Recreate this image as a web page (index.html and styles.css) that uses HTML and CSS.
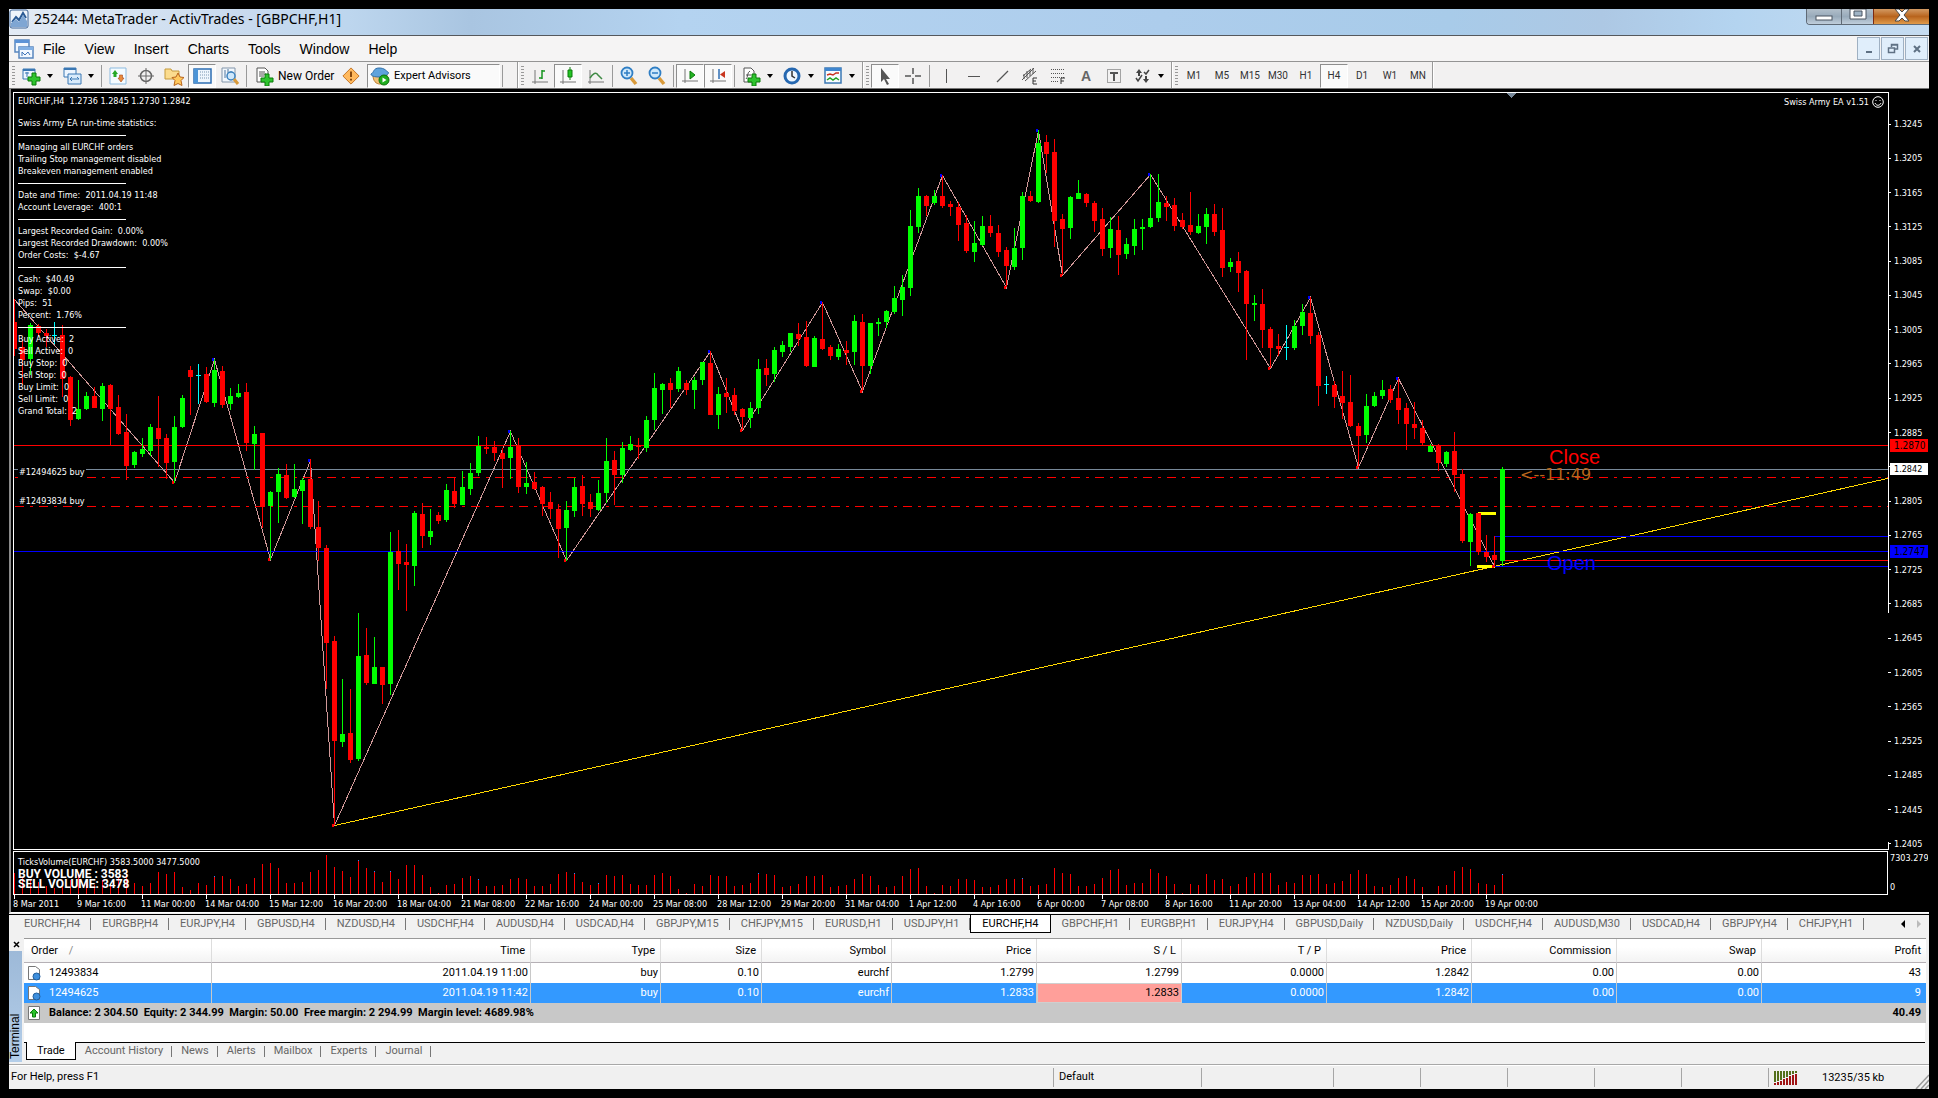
FILE: index.html
```html
<!DOCTYPE html>
<html lang="en">
<head>
<meta charset="utf-8">
<title>25244: MetaTrader - ActivTrades - [GBPCHF,H1]</title>
<link rel="stylesheet" href="styles.css">
</head>
<body>
<div class="window">
  <header class="titlebar">
    <svg class="app-icon" width="20" height="20" viewBox="0 0 20 20"><rect x="1" y="1" width="18" height="18" rx="2" fill="#eef4fb" stroke="#3e6496"/><path d="M3 13 7 8l3 3 4-7 3 5" fill="none" stroke="#2b5a94" stroke-width="2"/><path d="M2 18v-4l5-4 3 3 4-7 4 6v6z" fill="#7fa6d3"/></svg>
    <h1 class="title">25244: MetaTrader - ActivTrades - [GBPCHF,H1]</h1>
    <div class="caption-buttons">
      <button class="cap cap-min" aria-label="Minimize"><svg width="18" height="6"><rect x="1" y="1" width="16" height="4" fill="#fff" stroke="#4a5560"/></svg></button>
      <button class="cap cap-max" aria-label="Maximize"><svg width="18" height="12"><path d="M1 0h16v10H1z" fill="#fff" stroke="#4a5560"/><path d="M5 2h8v5H5z" fill="#9fb4c6" stroke="#4a5560"/></svg></button>
      <button class="cap cap-close" aria-label="Close"><svg width="16" height="13" viewBox="0 0 16 13"><path d="M1 0h4l3 3 3-3h4l-5 6 5 6h-4l-3-3-3 3H1l5-6z" fill="#fff" stroke="#4a4a4a"/></svg></button>
    </div>
  </header>

  <nav class="menubar">
    <svg class="menu-icon" width="20" height="20" viewBox="0 0 20 20"><path d="M1 1h14v12H1z" fill="#f2f8ff" stroke="#5a86be" stroke-width="1.5"/><path d="M1 1h14v3H1z" fill="#5d93d6"/><path d="M5 8h14v11H5z" fill="#f2f8ff" stroke="#5a86be" stroke-width="1.5"/><path d="M5 8h14v3H5z" fill="#82b0e4"/><path d="M8 17v-4l3 3 3-3 2 3" fill="none" stroke="#3f74b8"/></svg>
    <button>File</button><button>View</button><button>Insert</button><button>Charts</button><button>Tools</button><button>Window</button><button>Help</button>
    <div class="mdi-buttons">
      <button aria-label="Minimize chart"><svg width="12" height="12"><path d="M3 9h6" stroke="#5f7184" stroke-width="2"/></svg></button>
      <button aria-label="Restore chart"><svg width="12" height="12"><path d="M4.500 4V1.500h6V6H8M1.500 5h6v4.500h-6zM1 5h7M4 2h7" fill="none" stroke="#5f7184" stroke-width="1.500"/></svg></button>
      <button aria-label="Close chart"><svg width="12" height="12"><path d="m3 3 6 6M9 3l-6 6" stroke="#5f7184" stroke-width="2"/></svg></button>
    </div>
  </nav>

  <div class="toolbar">
    <div class="group group-main">
      <span class="grip"></span>
      <button class="tool drop" aria-label="New chart"><svg width="20" height="20"><path d="M2 3h12v10H2z" fill="#eef6ff" stroke="#3b78b4"/><path d="M2 3h12v2H2z" fill="#3b78b4"/><path d="M4 7h4M6 6v5" stroke="#3b78b4"/><path d="M11 7h4v4h4v4h-4v4h-4v-4H7v-4h4z" fill="#2fc42f" stroke="#0a7a0a"/></svg></button>
      <button class="tool drop" aria-label="Profiles"><svg width="20" height="20"><path d="M2 2h12v9H2z" fill="#eef6ff" stroke="#3b78b4"/><path d="M2 2h12v2H2z" fill="#3b78b4"/><path d="M6 8h13v10H6z" fill="#d9ebfb" stroke="#3b78b4"/><path d="M8 13h9M8 13l2-2M8 13l2 2M17 13l-2-2" fill="none" stroke="#3b78b4"/></svg></button>
      <span class="sep"></span>
      <button class="tool" aria-label="Market watch"><svg width="20" height="20"><path d="M2 2h16v16H2z" fill="#f4fbff" stroke="#8dbbe0"/><path d="m7 4 3 4H8.500v3h-3V8H4z" fill="#25a825"/><path d="m13 16 3-4h-1.500V9h-3v3H10z" fill="#e88b3c" stroke="#a7481c" stroke-width=".6"/></svg></button>
      <button class="tool" aria-label="Data window"><svg width="20" height="20"><circle cx="10" cy="10" r="5.500" fill="none" stroke="#666" stroke-width="1.500"/><path d="M10 2v16M2 10h16" stroke="#666"/></svg></button>
      <button class="tool" aria-label="Navigator"><svg width="20" height="20"><path d="M1 3h6l1 2h7v8H1z" fill="#fbdc8e" stroke="#c59a3d"/><path d="m14 7 2 4 4 .5-3 3 1 5-4-2-4 2 1-5-3-3 4-.5z" fill="#ffc95e" stroke="#b9651b"/></svg></button>
      <button class="tool pressed" aria-label="Terminal"><svg width="20" height="20"><path d="M2 3h17v14H2z" fill="#eef6fd" stroke="#2d6db3" stroke-width="1.500"/><path d="M2 3h4v14H2z" fill="#4c94d6"/><path d="M8 6h9M8 9h9M8 12h9" stroke="#7895b0" stroke-dasharray="1 1"/></svg></button>
      <button class="tool" aria-label="Strategy tester"><svg width="20" height="20"><path d="M2 2h13v14H2z" fill="#f2f7fc" stroke="#8295aa"/><path d="M5 4v8M8 3v6M11 5v6" stroke="#51779f"/><circle cx="11" cy="10" r="4" fill="#cfe8fb" stroke="#3c82be" stroke-width="1.500"/><path d="m14 13 4 5" stroke="#d99a3a" stroke-width="3"/></svg></button>
      <span class="sep"></span>
      <button class="tool labelled"><svg width="20" height="20"><path d="M3 2h8l3 3v11H3z" fill="#fff" stroke="#555"/><path d="M5 6h6M5 8h7M5 10h5" stroke="#555"/><path d="M11 8h4v4h4v4h-4v4h-4v-4H7v-4h4z" fill="#2fc42f" stroke="#0a7a0a"/></svg>New Order</button>
      <button class="tool" aria-label="Alert"><svg width="18" height="18" viewBox="0 0 20 20"><path d="m10 1 9 9-9 9-9-9z" fill="#ffb95e" stroke="#c06c1a"/><path d="M10 5v6M10 13v2" stroke="#7a3c06" stroke-width="2"/></svg></button>
      <button class="tool expert pressed"><svg width="20" height="20"><path d="M3 9c0 6 3 9 7 9s7-3 7-9z" fill="#f2c078" stroke="#b97c2d"/><path d="M1 8c3-1 2-6 8-6s7 3 9 4-2 5-8 5-9-1-9-3z" fill="#5fa3dc" stroke="#2e6ea8"/><circle cx="14" cy="14" r="5" fill="#20ae20" stroke="#0b700b"/><path d="m12.500 11.500 4 2.500-4 2.500z" fill="#fff"/></svg>Expert Advisors</button>
      <span class="sep"></span>
    </div>
    <div class="group">
      <span class="grip"></span>
      <button class="tool" aria-label="Bar chart"><svg width="20" height="20"><path d="M5 4v14M2 16h16" fill="none" stroke="#777"/><path d="M12 4v9M12 5h3M9 12h3" stroke="#17941f" stroke-width="1.500"/></svg></button>
      <button class="tool pressed" aria-label="Candlesticks"><svg width="20" height="20"><path d="M5 4v14M2 16h16" stroke="#777"/><path d="M12 1v13" stroke="#0a7a0a"/><path d="M10 4h4v7h-4z" fill="#23c423" stroke="#0a7a0a"/></svg></button>
      <button class="tool" aria-label="Line chart"><svg width="20" height="20"><path d="M4 4v14M2 16h16" stroke="#777"/><path d="M4 12c3-5 6-6 8-3l4 4" fill="none" stroke="#3f8a45" stroke-width="1.500"/></svg></button>
      <span class="sep"></span>
      <button class="tool" aria-label="Zoom in"><svg width="20" height="20"><path d="m12 12 5 6" stroke="#d99a3a" stroke-width="3.500"/><circle cx="8" cy="7" r="5.500" fill="#cfe8fb" stroke="#2f7ec4" stroke-width="1.800"/><path d="M8 4v6M5 7h6" stroke="#2f7ec4" stroke-width="1.500"/></svg></button>
      <button class="tool" aria-label="Zoom out"><svg width="20" height="20"><path d="m12 12 5 6" stroke="#d99a3a" stroke-width="3.500"/><circle cx="8" cy="7" r="5.500" fill="#cfe8fb" stroke="#2f7ec4" stroke-width="1.800"/><path d="M5 7h6" stroke="#2f7ec4" stroke-width="1.500"/></svg></button>
      <span class="sep"></span>
      <button class="tool pressed" aria-label="Auto scroll"><svg width="20" height="20"><path d="M5 3v14M2 15h16" stroke="#777"/><path d="m10 5 5 4-5 4z" fill="#23b423" stroke="#0a7a0a"/></svg></button>
      <button class="tool pressed" aria-label="Chart shift"><svg width="20" height="20"><path d="M5 3v14M2 15h16" stroke="#777"/><path d="M11 3v10" stroke="#2d6db3" stroke-width="1.500"/><path d="m17 5-5 3.500 5 3.500z" fill="#c8361f"/></svg></button>
      <span class="sep"></span>
      <button class="tool drop" aria-label="Indicators"><svg width="20" height="20"><path d="M3 2h7l3 3v11H3z" fill="#fff" stroke="#555"/><path d="M5 13c2-1 1-7 4-8M5 9h5" fill="none" stroke="#555"/><path d="M11 8h4v4h4v4h-4v4h-4v-4H7v-4h4z" fill="#2fc42f" stroke="#0a7a0a"/></svg></button>
      <button class="tool drop" aria-label="Periods"><svg width="20" height="20"><circle cx="10" cy="10" r="7" fill="#eef7ff" stroke="#2567b0" stroke-width="3"/><path d="M10 5v5l3 2" fill="none" stroke="#333" stroke-width="1.500"/></svg></button>
      <button class="tool drop" aria-label="Templates"><svg width="20" height="20"><path d="M2 2h16v15H2z" fill="#f7fbff" stroke="#3b78b4" stroke-width="1.500"/><path d="M2 2h16v3H2z" fill="#3f86cf"/><path d="m4 9 3-1 3 1 3-2 3 0" fill="none" stroke="#c8321f" stroke-width="1.500"/><path d="m4 14 3-2 3 2 3-2 3 2" fill="none" stroke="#23a323" stroke-width="1.500"/></svg></button>
    </div>
    <div class="group">
      <span class="grip"></span>
      <button class="tool pressed" aria-label="Cursor"><svg width="20" height="20"><path d="M6 2v14l3-3 3 6 2-1-3-5h4z" fill="#555"/></svg></button>
      <button class="tool" aria-label="Crosshair"><svg width="20" height="20"><path d="M10 2v6M10 12v6M2 10h6M12 10h6" stroke="#555" stroke-width="1.500"/></svg></button>
      <span class="sep"></span>
      <button class="tool" aria-label="Vertical line"><svg width="20" height="20"><path d="M10.500 3v14" stroke="#555"/></svg></button>
      <button class="tool" aria-label="Horizontal line"><svg width="20" height="20"><path d="M4 10.500h12" stroke="#555"/></svg></button>
      <button class="tool" aria-label="Trendline"><svg width="20" height="20"><path d="M5 16 16 5" stroke="#555" stroke-width="1.300"/></svg></button>
      <button class="tool" aria-label="Equidistant channel"><svg width="20" height="20"><path d="M2 14 14 2M3 10l8-7M5 15 16 5M4 13V8M7 12V5M10 10V4M13 8V2" stroke="#555"/><path d="M17 12h-4v6h4M13 15h3" fill="none" stroke="#333"/></svg></button>
      <button class="tool" aria-label="Fibonacci retracement"><svg width="20" height="20"><path d="M3 3.500h14M3 7.500h14M3 11.500h14M3 15.500h8" stroke="#555" stroke-dasharray="1 1"/><path d="M17 12h-4v6M13 15h3" fill="none" stroke="#333"/></svg></button>
      <button class="tool letter">A</button>
      <button class="tool" aria-label="Text label"><svg width="20" height="20"><path d="M3.500 3.500h13v13h-13z" fill="none" stroke="#555" stroke-dasharray="1 1"/><path d="M6 7h8M10 7v8" stroke="#555" stroke-width="2"/></svg></button>
      <button class="tool drop" aria-label="Arrows"><svg width="20" height="20"><path d="m7 3 3 4H8v3H6V7H4zM14 17l-3-4h2v-3h2v3h2z" fill="#444"/><path d="m4 12 2 3 4-6M12 6l2 2 3-4" fill="none" stroke="#444" stroke-width="1.500"/></svg></button>
    </div>
    <div class="group">
      <span class="grip"></span>
      <button class="tool period">M1</button><button class="tool period">M5</button><button class="tool period">M15</button><button class="tool period">M30</button><button class="tool period">H1</button><button class="tool period pressed">H4</button><button class="tool period">D1</button><button class="tool period">W1</button><button class="tool period">MN</button>
    </div>
  </div>

  <main class="chart">
    <section class="plot" aria-label="EURCHF H4 price chart">
      <svg class="canvas"><g id="price" transform="translate(-14 -93)"></g></svg>
      <div class="comment">
        <p class="ohlc">EURCHF,H4&nbsp; 1.2736 1.2845 1.2730 1.2842</p>
        <p>Swiss Army EA run-time statistics:</p>
        <hr>
        <p>Managing all EURCHF orders</p>
        <p>Trailing Stop management disabled</p>
        <p>Breakeven management enabled</p>
        <hr>
        <p>Date and Time:&nbsp; 2011.04.19 11:48</p>
        <p>Account Leverage:&nbsp; 400:1</p>
        <hr>
        <p>Largest Recorded Gain:&nbsp; 0.00%</p>
        <p>Largest Recorded Drawdown:&nbsp; 0.00%</p>
        <p>Order Costs:&nbsp; $-4.67</p>
        <hr>
        <p>Cash:&nbsp; $40.49</p>
        <p>Swap:&nbsp; $0.00</p>
        <p>Pips:&nbsp; 51</p>
        <p>Percent:&nbsp; 1.76%</p>
        <hr>
        <p>Buy Active:&nbsp; 2</p>
        <p>Sell Active:&nbsp; 0</p>
        <p>Buy Stop:&nbsp; 0</p>
        <p>Sell Stop:&nbsp; 0</p>
        <p>Buy Limit:&nbsp; 0</p>
        <p>Sell Limit:&nbsp; 0</p>
        <p>Grand Total:&nbsp; 2</p>
      </div>
      <span class="order order-a">#12494625 buy</span>
      <span class="order order-b">#12493834 buy</span>
      <span class="advisor">Swiss Army EA v1.51 <svg width="12" height="12"><circle cx="6" cy="6" r="5.300" fill="none" stroke="#fff"/><path d="M4 4v1M8 4v1M3 7c1 3 5 3 6 0" fill="none" stroke="#fff"/></svg></span>
      <span class="mark close-mark">Close</span>
      <span class="mark timer-mark">&lt;--11:49</span>
      <span class="mark open-mark">Open</span>
    </section>
    <aside class="axis">
      <ol class="prices">
        <li>1.3245</li><li>1.3205</li><li>1.3165</li><li>1.3125</li><li>1.3085</li><li>1.3045</li><li>1.3005</li><li>1.2965</li><li>1.2925</li><li>1.2885</li><li>1.2845</li><li>1.2805</li><li>1.2765</li><li>1.2725</li><li>1.2685</li><li>1.2645</li><li>1.2605</li><li>1.2565</li><li>1.2525</li><li>1.2485</li><li>1.2445</li><li>1.2405</li>
      </ol>
      <span class="tag tag-red">1.2870</span>
      <span class="tag tag-white">1.2842</span>
      <span class="tag tag-blue">1.2747</span>
    </aside>
    <section class="volume" aria-label="Ticks volume">
      <svg class="canvas"><g id="ticks"></g></svg>
      <div class="volume-text">
        <p>TicksVolume(EURCHF) 3583.5000 3477.5000</p>
        <p class="strong">BUY VOLUME : 3583</p>
        <p class="strong">SELL VOLUME: 3478</p>
      </div>
    </section>
    <aside class="volume-axis"><span>7303.279</span><span>0</span></aside>
    <ol class="times">
      <li>8 Mar 2011</li><li>9 Mar 16:00</li><li>11 Mar 00:00</li><li>14 Mar 04:00</li><li>15 Mar 12:00</li><li>16 Mar 20:00</li><li>18 Mar 04:00</li><li>21 Mar 08:00</li><li>22 Mar 16:00</li><li>24 Mar 00:00</li><li>25 Mar 08:00</li><li>28 Mar 12:00</li><li>29 Mar 20:00</li><li>31 Mar 04:00</li><li>1 Apr 12:00</li><li>4 Apr 16:00</li><li>6 Apr 00:00</li><li>7 Apr 08:00</li><li>8 Apr 16:00</li><li>11 Apr 20:00</li><li>13 Apr 04:00</li><li>14 Apr 12:00</li><li>15 Apr 20:00</li><li>19 Apr 00:00</li>
    </ol>
  </main>

  <nav class="chart-tabs">
    <button>EURCHF,H4</button><button>EURGBP,H4</button><button>EURJPY,H4</button><button>GBPUSD,H4</button><button>NZDUSD,H4</button><button>USDCHF,H4</button><button>AUDUSD,H4</button><button>USDCAD,H4</button><button>GBPJPY,M15</button><button>CHFJPY,M15</button><button>EURUSD,H1</button><button>USDJPY,H1</button><button class="active">EURCHF,H4</button><button>GBPCHF,H1</button><button>EURGBP,H1</button><button>EURJPY,H4</button><button>GBPUSD,Daily</button><button>NZDUSD,Daily</button><button>USDCHF,H4</button><button>AUDUSD,M30</button><button>USDCAD,H4</button><button>GBPJPY,H4</button><button>CHFJPY,H1</button>
    <span class="scrollers">
      <button class="scroll-left" aria-label="Scroll left"></button>
      <button class="scroll-right" aria-label="Scroll right"></button>
    </span>
  </nav>

  <section class="terminal">
    <div class="rail">
      <button class="rail-close" aria-label="Close terminal"><svg width="7" height="7"><path d="m1 1 5 5M6 1 1 6" stroke="#000" stroke-width="1.500"/></svg></button>
      <h2 class="rail-title">Terminal</h2>
    </div>
    <div class="terminal-body">
      <table class="orders">
        <colgroup><col class="w-order"><col class="w-time"><col class="w-mid"><col class="w-size"><col class="w-mid"><col class="w-num"><col class="w-num"><col class="w-num"><col class="w-num"><col class="w-num"><col class="w-num"><col class="w-profit"></colgroup>
        <thead>
          <tr><th>Order <span class="sort">/</span></th><th>Time</th><th>Type</th><th>Size</th><th>Symbol</th><th>Price</th><th>S / L</th><th>T / P</th><th>Price</th><th>Commission</th><th>Swap</th><th>Profit</th></tr>
        </thead>
        <tbody>
          <tr><td><span class="cell"><svg width="14" height="16"><path d="M1.500 1.500h7l4 3v10h-11z" fill="#fff" stroke="#777"/><circle cx="9.500" cy="11.500" r="3.500" fill="#3f8fdc" stroke="#1f5e9e"/></svg>12493834</span></td><td>2011.04.19 11:00</td><td>buy</td><td>0.10</td><td>eurchf</td><td>1.2799</td><td>1.2799</td><td>0.0000</td><td>1.2842</td><td>0.00</td><td>0.00</td><td>43</td></tr>
          <tr class="selected"><td><span class="cell"><svg width="14" height="16"><path d="M1.500 1.500h7l4 3v10h-11z" fill="#fff" stroke="#777"/><circle cx="9.500" cy="11.500" r="3.500" fill="#3f8fdc" stroke="#1f5e9e"/></svg>12494625</span></td><td>2011.04.19 11:42</td><td>buy</td><td>0.10</td><td>eurchf</td><td>1.2833</td><td class="stop-hit">1.2833</td><td>0.0000</td><td>1.2842</td><td>0.00</td><td>0.00</td><td>9</td></tr>
          <tr class="balance"><td colspan="11"><span class="cell"><svg width="14" height="16"><path d="M1.500 1.500h11v13h-11z" fill="#fff" stroke="#777"/><path d="m7 4 4 4H8.500v4h-3V8H3z" fill="#2cc42c" stroke="#0b7a0b"/></svg>Balance: 2 304.50&nbsp; Equity: 2 344.99&nbsp; Margin: 50.00&nbsp; Free margin: 2 294.99&nbsp; Margin level: 4689.98%</span></td><td>40.49</td></tr>
        </tbody>
      </table>
      <nav class="terminal-tabs">
        <button class="active">Trade</button><button>Account History</button><button>News</button><button>Alerts</button><button>Mailbox</button><button>Experts</button><button>Journal</button>
      </nav>
    </div>
  </section>

  <footer class="status">
    <span class="s-help">For Help, press F1</span>
    <span class="s-profile">Default</span>
    <span class="s-wide"></span><span class="s-cell"></span><span class="s-cell"></span><span class="s-cell"></span><span class="s-cell"></span><span class="s-cell"></span>
    <span class="s-traffic">
      <svg width="24" height="14"><path d="M1 0v11M4 0v10M7 0v9M10 0v7M13 0v6M16 0v4M19 0v3M22 0v2" stroke="#54701c" stroke-width="2"/><path d="M1 12v2M4 11v3M7 10v4M10 8v6M13 7v7M16 5v9M19 4v10M22 3v11" stroke="#a01414" stroke-width="2"/></svg>
      13235/35 kb
    </span>
    <svg class="resize" width="14" height="16"><path d="M14 2 1 16M14 7 6 16M14 12l-4 4" stroke="#999" stroke-width="1.500"/></svg>
  </footer>
</div>
<script src="chart.js"></script>
</body>
</html>
```
FILE: styles.css
```css
* { box-sizing: border-box; }
html { background: #000; }
body { margin: 0; padding: 9px; font: 11px/14px Roboto, "Liberation Sans", sans-serif; color: #000; }
button { margin: 0; padding: 0; border: 0; background: none; font: inherit; color: inherit; white-space: nowrap; }
h1, h2, p, ol { margin: 0; padding: 0; font-weight: normal; list-style: none; }
svg { flex: none; }
.window { display: flex; flex-direction: column; background: #f1f1f1; overflow: hidden; }

/* title bar */
.titlebar { display: flex; align-items: flex-start; height: 27px; border-bottom: 1px solid #55585c; background: linear-gradient(90deg, #e3ebf5 0, #c8daee 240px, #bdd6ee 340px, #a9c5e1 24%, #b4d3f0 35%, #adcdec 60%, #a8cbe9 75%, #adc8e4 83%, #b4d4f0 90%, #c6dcf1 100%); }
.title { flex: 1; margin-left: 5px; font: 14px/20px "Noto Sans", "Liberation Sans", sans-serif; }
.caption-buttons { display: flex; align-self: flex-start; height: 16px; border: 1px solid #5f6a76; border-top: 0; border-right: 0; border-radius: 0 0 0 4px; overflow: hidden; }
.cap { display: flex; justify-content: center; align-items: flex-start; width: 34px; background: linear-gradient(#b2bfca, #98aaba 50%, #c0cedb); }
.cap-min { padding-top: 6px; }
.cap-max { width: 32px; border-left: 1px solid #5f6a76; }
.cap-close { width: 56px; border-left: 1px solid #7c2a12; background: linear-gradient(#d39a63, #b8641d 50%, #e19a4a); }

/* menu */
.menubar { display: flex; align-items: center; height: 26px; padding-left: 5px; border-bottom: 1px solid #949494; background: #f5f4f4; font: 14px/18px "Liberation Sans", sans-serif; }
.menubar > button { padding: 0 10px 0 9px; }
.mdi-buttons { display: flex; gap: 1px; margin-left: auto; padding-right: 1px; }
.mdi-buttons button { display: flex; align-items: center; justify-content: center; width: 23px; height: 23px; border: 1px solid #9fb0c2; background: #e0eefb; }

/* toolbar */
.toolbar { display: flex; height: 27px; border-bottom: 1px solid #777; background: #f2f1f1; font-size: 12px; }
.group { display: flex; align-items: center; height: 26px; padding: 1px 2px 0 3px; border-right: 1px solid #999; box-shadow: 1px 0 #fff; }
.group-main { width: 509px; }
.group:last-child { padding-right: 0; }
.grip { width: 3px; height: 19px; margin-right: 2px; background: repeating-linear-gradient(#999 0 1px, transparent 1px 3px); }
.sep { width: 1px; height: 22px; margin: 0 2px; background: #999; }
.tool { display: flex; align-items: center; justify-content: center; width: 28px; height: 24px; flex: none; }
.pressed { border: 1px solid; border-color: #8e8e8e #fff #fff #8e8e8e; background: #fafafa; }
.drop { width: 41px; gap: 6px; padding: 0 3px 0 4px; justify-content: flex-start; }
.drop::after { content: ""; border: 3px solid transparent; border-top: 4px solid #000; border-bottom: 0; }
.labelled { width: 88px; gap: 4px; justify-content: flex-start; padding-left: 5px; }
.expert { width: 133px; gap: 4px; justify-content: flex-start; margin-left: 2px; padding-left: 2px; font-size: 11px; }
.letter { font: bold 14px/16px "Liberation Sans", sans-serif; color: #666; }
.period { font-size: 10px; color: #333; }

/* chart */
.chart { display: grid; grid-template: 758px 44px 16px / minmax(0, 1fr) 40px; row-gap: 1px; padding: 3px 1px 0 2px; border-left: 2px solid #8a8a8a; border-bottom: 1px solid #fff; background: #000; color: #fff; font: 9px/12px "DejaVu Sans Condensed", "Noto Sans", sans-serif; }
.canvas { display: block; width: 100%; height: 100%; overflow: hidden; shape-rendering: crispEdges; }
.plot, .volume { position: relative; border: 1px solid #fff; }
.plot { border-right: 0; }
.comment { position: absolute; left: 4px; top: 2px; white-space: nowrap; }
.comment .ohlc { margin-bottom: 10px; }
.comment hr { width: 108px; height: 1px; margin: 6px 0 5px; border: 0; background: #fff; }
.order { position: absolute; left: 4px; padding: 0 1px; background: #000; }
.order-a { top: 373px; }
.order-b { top: 402px; background: none; }
.advisor { position: absolute; right: 4px; top: 3px; display: flex; gap: 3px; }
.mark { position: absolute; font: 20px/24px "Liberation Sans", sans-serif; }
.close-mark { left: 1535px; top: 352px; color: #f00; }
.timer-mark { left: 1506px; top: 370px; font: 16px/24px "DejaVu Sans", sans-serif; color: #b8661c; }
.open-mark { left: 1533px; top: 458px; color: #00f; }
.axis { position: relative; padding-top: 26px; background: linear-gradient(#fff 0 521px, transparent 521px 750px, #fff 750px) no-repeat 0 0 / 1px 100%; }
.prices { display: flex; flex-direction: column; justify-content: space-between; height: 732px; }
.prices li { display: flex; align-items: center; gap: 3px; }
.prices li::before { content: ""; width: 3px; height: 1px; background: #fff; }
.tag { position: absolute; left: 2px; right: 0; padding-left: 4px; }
.tag-red { top: 347px; background: #f00; color: #000; font-size: 10px; line-height: 13px; }
.tag-white { top: 371px; background: #fff; color: #000; }
.tag-blue { top: 453px; background: #00f; color: #000; font-size: 10px; line-height: 13px; }
.volume-text { position: absolute; left: 4px; top: 3px; line-height: 14px; white-space: nowrap; }
.volume-text .strong { font: bold 12px/10px Roboto, sans-serif; }
.volume-axis { display: flex; flex-direction: column; justify-content: space-between; padding: 1px 0 2px 2px; overflow: hidden; }
.times { display: flex; grid-column: 1 / -1; margin-top: -1px; overflow: hidden; }
.times li { width: 64px; flex: none; padding-top: 3px; white-space: nowrap; background: linear-gradient(#fff, #fff) no-repeat 1px 0 / 1px 4px; }

/* chart tabs */
.chart-tabs { display: flex; align-items: flex-start; height: 24px; margin-top: 1px; padding-left: 4px; border-top: 1px solid #000; background: #f1f1f1; color: #666; }
.chart-tabs > button { position: relative; height: 18px; padding: 0 11px; flex: none; }
.chart-tabs > button::after { content: ""; position: absolute; right: 0; top: 3px; width: 1px; height: 12px; background: #777; }
.chart-tabs > .active { border: 1px solid #000; border-top: 0; background: #fff; color: #000; }
.chart-tabs > .active::after { display: none; }
.scrollers { display: flex; gap: 12px; margin-left: auto; padding: 5px 8px 0 0; }
.scrollers button { border: 4px solid transparent; }
.scrollers .scroll-left { border-left: 0; border-right-color: #000; }
.scrollers .scroll-right { border-right: 0; border-left-color: #bbb; }

/* terminal */
.terminal { display: flex; height: 127px; border-bottom: 1px solid #a8a8a8; }
.rail { display: flex; flex-direction: column; width: 15px; padding: 0 0 2px; }
.rail-close { height: 13px; line-height: 7px; }
.rail-title { flex: 1; width: 13px; padding-top: 3px; background: linear-gradient(#b4cee9, #9db9d8); writing-mode: vertical-rl; transform: rotate(180deg); font: 12px/13px "Liberation Sans", sans-serif; }
.terminal-body { flex: 1; min-width: 0; margin-right: 4px; }
.orders { width: 100%; table-layout: fixed; border-collapse: separate; border-spacing: 0; border-top: 1px solid #999; background: #fff; text-align: right; }
.w-order { width: 188px; } .w-time { width: 319px; } .w-mid { width: 130px; } .w-size { width: 101px; } .w-num { width: 145px; } .w-profit { width: 164px; }
.orders th { height: 24px; padding: 0 5px; border-right: 1px solid #ddd; border-bottom: 1px solid #b5b0b5; background: linear-gradient(#fff 0 35%, #f3f3f3); font-weight: normal; }
.orders th:first-child, .orders td:first-child { text-align: left; }
.orders th:first-child { padding-left: 7px; }
.sort { margin-left: 8px; color: #888; }
.orders td { height: 20px; padding: 0 2px; border-right: 1px solid #c8c8c8; white-space: nowrap; }
.orders td:first-child { padding-left: 3px; }
.orders tr > :last-child { border-right: 0; padding-right: 5px; }
.cell { display: flex; align-items: center; gap: 8px; }
.selected td { background: #3399ff; color: #fff; }
.selected .stop-hit { background: #ff9f9a; color: #000; outline: 1px solid #cfcfcf; outline-offset: -1px; }
.balance td { border: 0; background: #c8c8c8; font-weight: bold; }
.terminal-tabs { display: flex; padding-left: 2px; color: #666; border-top: 19px solid #fff; box-shadow: inset 0 1px #000; }
.terminal-tabs button { position: relative; height: 18px; padding: 0 9px; }
.terminal-tabs button::after { content: ""; position: absolute; right: 0; top: 4px; width: 1px; height: 11px; background: #777; }
.terminal-tabs .active { padding: 0 10px; border: 1px solid #000; border-top: 0; background: #fff; color: #000; }
.terminal-tabs .active::after { display: none; }

/* status bar */
.status { display: flex; align-items: center; height: 24px; border-top: 1px solid #fff; background: #f0f0f0; }
.status > span { height: 19px; line-height: 18px; border-left: 1px solid #a6a6a6; }
.status .s-help { flex: 1; padding-left: 2px; border-left: 0; }
.status .s-profile { width: 148px; padding-left: 5px; }
.s-wide { width: 132px; }
.s-cell { width: 87px; }
.s-traffic { display: flex; align-items: center; gap: 24px; width: 147px; padding-left: 5px; }
.resize { align-self: flex-end; }
```
FILE: chart.js
```js
const NS = "http://www.w3.org/2000/svg";
const STEP = 8;
const LEFT = 14;

// One bar per entry: colour, high, body top, body bottom, low (chart units).
const BARS = `
r299,322,349,356 r340,347,360,385 g323,325,359,375 r324,326,333,336 r329,333,336,347 c322,335,336,344 r325,335,379,397 r376,377,420,426
g380,409,419,420 g392,396,409,410 r387,396,408,408 g383,386,409,421 r384,385,409,445 r395,407,434,435 r414,432,466,480 g451,452,465,468
g438,449,454,457 g424,427,451,456 r396,428,439,467 r434,438,463,479 g416,427,462,483 g395,398,427,428 r366,370,377,415 c364,375,376,404
r367,374,402,403 g359,370,403,407 r366,371,405,408 g388,396,404,410 g384,393,397,398 r383,392,443,451 g426,434,444,470 r433,433,507,528
g491,492,506,560 g468,474,492,523 r464,475,498,499 g464,489,497,498 g478,480,491,524 r459,479,527,529 r501,527,548,561 r545,548,643,689
r636,641,741,825 g679,734,742,747 r689,733,760,763 g613,656,759,761 r628,655,683,685 g637,667,684,684 r667,667,685,704 g532,552,684,695
r530,551,564,590 r544,562,565,611 g511,513,566,586 r503,514,536,548 g509,531,537,545 r512,515,521,524 g484,490,520,522 r477,491,504,508
g471,487,505,505 g463,473,489,495 g436,446,473,476 r437,447,449,454 r441,447,453,461 r448,453,459,488 g431,447,458,479 r438,445,487,493
g462,483,487,494 r472,482,489,490 r486,487,504,516 r492,502,509,519 r504,509,529,558 g501,510,528,561 g478,487,511,517 r475,486,504,516
r494,502,509,517 g480,493,510,511 g438,461,493,503 r451,460,475,505 g442,448,475,483 g436,444,450,451 r438,445,447,459 g416,420,448,452
g373,388,420,430 g383,384,390,414 r378,383,390,408 g367,371,389,392 r380,383,390,395 g377,380,390,409 g362,362,380,385 r351,363,415,415
g387,394,415,429 r378,393,397,413 r388,395,411,415 r408,409,417,430 g402,408,418,428 g359,369,408,414 r359,368,375,386 g347,350,374,382
g341,345,352,357 g333,333,347,352 r323,334,339,346 r321,337,366,367 g336,338,367,367 r302,339,349,350 r345,347,356,360 g344,349,357,360
r341,350,353,365 g315,321,352,365 r314,322,366,391 g323,323,366,374 g318,322,324,336 g310,311,322,328 g286,298,312,314 g275,287,300,316
g210,226,288,296 g188,196,227,233 r195,196,206,216 g190,196,203,205 r175,196,206,208 r201,204,207,216 r202,207,225,241 r215,223,251,253
g221,243,252,262 g216,226,245,246 r215,226,233,237 r225,233,252,257 r247,250,266,287 g228,248,267,270 g192,196,248,260 r191,196,201,202
g130,143,202,203 r135,142,154,173 r139,152,221,247 r214,219,229,275 g196,197,228,239 g180,193,199,199 r193,194,203,207 r201,203,221,232
r208,219,249,256 g217,229,248,258 r216,230,255,275 g238,244,254,259 g219,229,246,255 g219,227,229,250 g174,218,227,228 g174,202,218,222
r196,203,207,221 r198,205,226,231 r213,220,227,229 r192,225,232,235 g214,226,233,234 g208,214,227,244 r204,214,232,236 r208,230,268,277
g258,262,267,272 r252,261,273,292 r270,271,304,360 g295,303,305,321 r289,304,330,348 r327,329,348,368 r334,346,349,356 c325,347,348,360
g320,326,348,350 g304,312,326,335 r297,313,336,344 r332,335,386,406 c376,384,385,394 r381,385,397,408 r371,396,403,419 r375,402,426,427
r423,426,436,467 g394,406,435,443 g392,396,406,407 g380,390,396,399 r385,389,400,403 r378,398,410,424 r403,408,424,450 r402,424,428,439
r420,428,443,445 g444,446,452,452 r444,445,463,471 g451,452,464,467 r432,451,475,492 r469,474,541,543 g513,514,542,566 r513,513,552,555
r535,552,557,562 r536,555,560,567 g467,469,561,566`.trim().split(/\s+/);

// Swing points of the zigzag: bar number, height, H(igh) or L(ow).
const SWINGS = [[0, 299, "H"], [20, 482, "L"], [25, 359, "H"], [32, 559, "L"], [37, 460, "H"], [40, 825, "L"], [62, 431, "H"], [69, 560, "L"], [87, 351, "H"], [91, 430, "L"], [101, 302, "H"], [106, 391, "L"], [116, 175, "H"], [124, 287, "L"], [128, 130, "H"], [131, 275, "L"], [142, 174, "H"], [157, 368, "L"], [162, 297, "H"], [168, 467, "L"], [173, 378, "H"], [185, 566, "L"]];

// Tick volume per bar; bars in BLUE_TIPS end in a blue pixel.
const VOLUME = [21, 16, 14, 12, 8, 6, 10, 14, 22, 12, 9, 14, 10, 17, 25, 11, 8, 11, 22, 20, 22, 7, 4, 11, 9, 18, 18, 15, 8, 10, 16, 30, 31, 26, 11, 11, 12, 22, 24, 39, 27, 23, 17, 34, 26, 23, 12, 23, 15, 29, 29, 19, 7, 1, 9, 10, 16, 18, 15, 8, 8, 9, 15, 16, 15, 8, 8, 10, 20, 22, 21, 12, 9, 11, 19, 18, 19, 10, 9, 9, 19, 21, 18, 5, 1, 10, 8, 19, 18, 18, 8, 9, 11, 21, 20, 19, 7, 8, 10, 18, 18, 19, 7, 8, 9, 15, 20, 18, 9, 7, 8, 18, 25, 26, 8, 1, 9, 8, 15, 15, 14, 7, 7, 9, 15, 15, 16, 8, 9, 10, 26, 21, 20, 8, 8, 10, 16, 24, 25, 9, 11, 11, 25, 21, 18, 10, 1, 10, 9, 20, 14, 15, 8, 10, 17, 21, 21, 21, 9, 12, 11, 19, 19, 20, 10, 11, 13, 20, 24, 20, 8, 7, 9, 16, 18, 15, 7, 0, 8, 9, 23, 27, 25, 11, 10, 9, 20];
const BLUE_TIPS = [25, 43, 45, 47, 58, 70, 73, 93, 126, 186];

const COLOURS = { r: "#f00", g: "#0f0", c: "#0ff" };

function add(parent, name, attrs) {
  const el = document.createElementNS(NS, name);
  for (const key in attrs) el.setAttribute(key, attrs[key]);
  parent.appendChild(el);
}
const rect = (parent, x, y, width, height, fill) => add(parent, "rect", { x, y, width, height, fill });

const price = document.getElementById("price");
const WIDE = 4000;

add(price, "path", { d: "M334.5 825.5 1887.5 478.500l700-156", stroke: "#ffd700", fill: "none" });
add(price, "polyline", { points: SWINGS.map(([n, y]) => `${LEFT + n * STEP + 0.5},${y + 0.5}`).join(" "), fill: "none", stroke: "#d09898" });
rect(price, LEFT, 445, WIDE, 1, "#f00");
rect(price, LEFT, 469, WIDE, 1, "#778899");
for (const y of [477.5, 506.5]) add(price, "path", { d: `M15 ${y}H${WIDE}`, stroke: "#f00", "stroke-dasharray": "9 6 3 6" });
rect(price, LEFT, 551, WIDE, 1, "#00f");
rect(price, 1494, 536, WIDE, 1, "#00f");
rect(price, 1502, 560, WIDE, 1, "#f00");
rect(price, 1494, 566, WIDE, 1, "#00f");
rect(price, 1478, 512, 18, 3, "#ff0");
rect(price, 1477, 565, 18, 3, "#ff0");

BARS.forEach((bar, n) => {
  const x = LEFT + n * STEP;
  const fill = COLOURS[bar[0]];
  const [high, top, bottom, low] = bar.slice(1).split(",").map(Number);
  rect(price, x, high, 1, Math.max(low - high, 1), fill);
  rect(price, x - 2, top, 5, Math.max(bottom - top, 1), fill);
});
SWINGS.forEach(([n, y, kind]) => {
  rect(price, LEFT + n * STEP - 2, y - 1, 2, 3, kind === "H" ? "#00f" : "#f00");
});
add(price, "path", { d: "M1506 93h10l-5 5z", fill: "#778899" });

const ticks = document.getElementById("ticks");
VOLUME.forEach((v, n) => {
  rect(ticks, n * STEP, 42 - v, 1, v, "#f00");
  if (BLUE_TIPS.includes(n)) rect(ticks, n * STEP, 42 - v, 1, 1, "#38f");
});
```
